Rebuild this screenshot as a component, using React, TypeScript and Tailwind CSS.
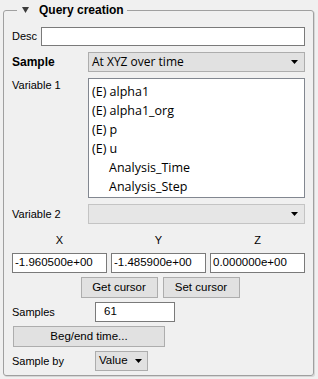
// Query creation group box — Qt-style form with variable list, XYZ coords and sampling controls.
const VARIABLES: { name: string; indent: boolean }[] = [
  { name: "(E) alpha1", indent: false },
  { name: "(E) alpha1_org", indent: false },
  { name: "(E) p", indent: false },
  { name: "(E) u", indent: false },
  { name: "Analysis_Time", indent: true },
  { name: "Analysis_Step", indent: true },
];

const COORDS = [
  { axis: "X", value: "-1.960500e+00" },
  { axis: "Y", value: "-1.485900e+00" },
  { axis: "Z", value: "0.000000e+00" },
];

function Arrow() {
  return (
    <svg width="7" height="4" viewBox="0 0 7 4" className="shrink-0">
      <path d="M0 0H7L3.5 4Z" fill="#000" />
    </svg>
  );
}

export default function App() {
  return (
    <div className="h-[379px] w-[318px] bg-[#f0f0f0] pl-[3px] font-['Liberation_Sans',Arial,sans-serif] text-[11px] text-black">
      <fieldset className="h-[376px] w-[311px] rounded-[3px] border border-[#a0a0a0] px-[8px] pt-0 shadow-[1px_1px_0_#d6d6d6]">
        <legend className="ml-[5px] flex h-[20px] items-center px-[3px]">
          <svg width="7" height="6" viewBox="0 0 7 6" className="mr-[10px] ml-[2px]">
            <path d="M0 0H7L3.5 6Z" fill="#3c3c3c" />
          </svg>
          <span className="text-[12px] font-bold leading-[20px]">Query creation</span>
        </legend>

        <div className="mt-[7px] flex h-[19px] items-center">
          <span className="w-[29px]">Desc</span>
          <div className="h-[19px] flex-1 border border-[#7a7a7a] bg-white" />
        </div>

        <div className="mt-[6px] flex h-[20px] items-center">
          <span className="w-[76px] text-[12px] font-bold">Sample</span>
          <div className="flex h-[20px] flex-1 items-center justify-between border border-[#adadad] bg-[#e1e1e1] pr-[6px] pl-[3px] font-['Open_Sans',sans-serif] text-[12px]">
            <span>At XYZ over time</span>
            <Arrow />
          </div>
        </div>

        <div className="mt-[6px] flex items-start">
          <span className="w-[76px] pt-[1px] leading-[13px]">Variable 1</span>
          <ul className="h-[120px] flex-1 border border-[#828790] bg-white pt-[3px] pl-[3px] font-['Open_Sans',sans-serif] text-[12.5px] leading-[19px]">
            {VARIABLES.map((v) => (
              <li key={v.name} className={v.indent ? "pl-[17px]" : ""}>
                {v.name}
              </li>
            ))}
          </ul>
        </div>

        <div className="mt-[6px] flex h-[20px] items-center">
          <span className="w-[76px]">Variable 2</span>
          <div className="flex h-[20px] flex-1 items-center justify-end border border-[#c4c4c4] bg-[#e6e6e6] pr-[6px]">
            <Arrow />
          </div>
        </div>

        <div className="mt-[10px] grid grid-cols-3 gap-x-[4px] leading-[13px]">
          {COORDS.map((c) => (
            <span key={c.axis} className="text-center">
              {c.axis}
            </span>
          ))}
        </div>
        <div className="mt-[6px] grid grid-cols-3 gap-x-[4px]">
          {COORDS.map((c) => (
            <div
              key={c.axis}
              className="flex h-[20px] items-center border border-[#7a7a7a] bg-white pl-[2px] text-[11.5px]"
            >
              {c.value}
            </div>
          ))}
        </div>

        <div className="mt-[4px] flex justify-center gap-[5px] pl-[3px]">
          <button className="h-[21px] w-[77px] border border-[#adadad] bg-[#e1e1e1] text-[11.5px]">
            Get cursor
          </button>
          <button className="h-[21px] w-[77px] border border-[#adadad] bg-[#e1e1e1] text-[11.5px]">
            Set cursor
          </button>
        </div>

        <div className="mt-[4px] flex h-[20px] items-center">
          <span className="w-[83px]">Samples</span>
          <div className="flex h-[20px] w-[80px] items-center border border-[#7a7a7a] bg-white pl-[8px] text-[11.5px]">
            61
          </div>
        </div>

        <button className="mt-[4px] ml-[1px] h-[21px] w-[152px] border border-[#adadad] bg-[#e1e1e1] text-[11.5px]">
          Beg/end time...
        </button>

        <div className="mt-[4px] flex h-[20px] items-center">
          <span className="w-[83px]">Sample by</span>
          <div className="flex h-[20px] w-[53px] items-center justify-between border border-[#adadad] bg-[#e1e1e1] pr-[5px] pl-[3px] text-[11.5px]">
            <span>Value</span>
            <Arrow />
          </div>
        </div>
      </fieldset>
    </div>
  );
}
